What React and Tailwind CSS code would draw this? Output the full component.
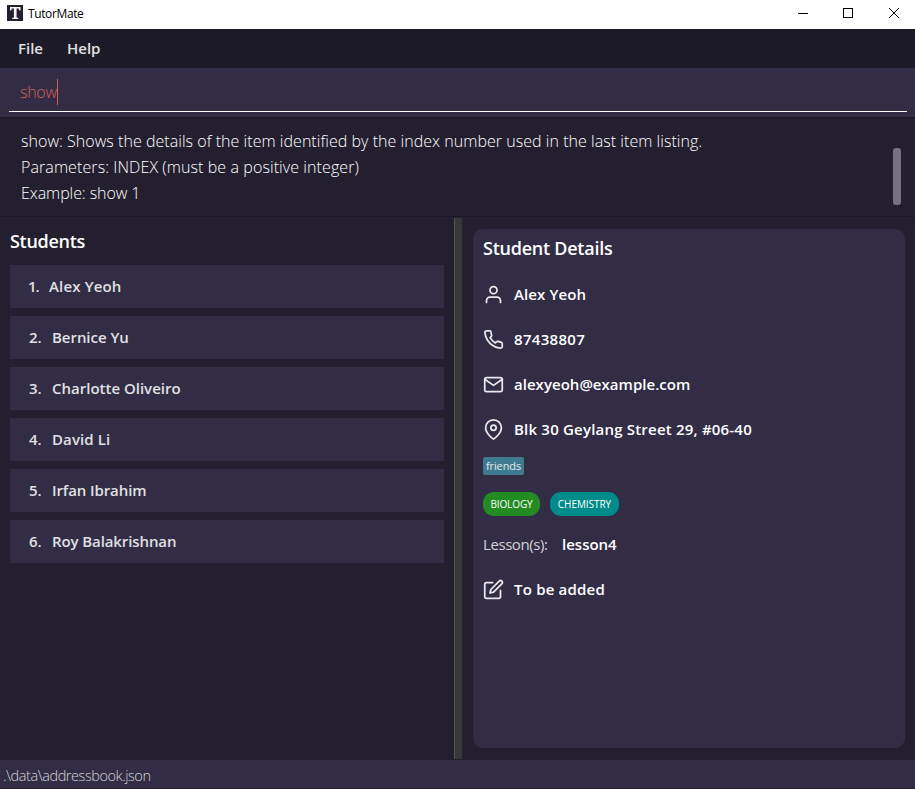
import React from "react";
import { FiUser, FiPhone, FiMail, FiMapPin, FiEdit } from "react-icons/fi";

const students = [
  { name: "Alex Yeoh", number: "-ml-px w-[11px] tracking-[-1px]", tracking: "tracking-[0.15px]" },
  { name: "Bernice Yu", number: "w-[13px]", tracking: "tracking-[-0.04px]" },
  { name: "Charlotte Oliveiro", number: "w-[13px]", tracking: "tracking-normal" },
  { name: "David Li", number: "w-[13px]", tracking: "tracking-[0.1px]" },
  { name: "Irfan Ibrahim", number: "w-[13px]", tracking: "tracking-[-0.1px]" },
  { name: "Roy Balakrishnan", number: "w-[13px]", tracking: "tracking-[-0.1px]" },
];

function TitleBar() {
  return (
    <header className="flex h-[29px] shrink-0 items-center bg-white pl-[7px] text-black">
      <span className="mb-[3px] flex h-4 w-4 items-center justify-center bg-[#241f2f]">
        <svg width="16" height="16" viewBox="0 0 16 16" fill="#f4f4ee">
          <path d="M3 2h10.5v3.5h-1.2L11.6 3.500H9.600V12.500L11.300 13v1H5.200v-1L6.900 12.500V3.500H4.900L4.200 5.500H3z" />
        </svg>
      </span>
      <span className="mb-px ml-[5px] text-[12px] leading-4 tracking-[-0.38px]">TutorMate</span>
      <svg className="mb-[3px] ml-auto mr-[15px]" width="102" height="12" viewBox="0 0 102 12" fill="none" stroke="#000">
        <path d="M0 6.500h10" />
        <rect x="45.500" y="1.500" width="9" height="9" />
        <path d="M91 1l10 10M101 1L91 11" />
      </svg>
    </header>
  );
}

function Detail({ icon: Icon, tracking = "tracking-normal", children }) {
  return (
    <div className="flex h-[45px] items-center">
      <Icon size={21} color="#e9e8ec" />
      <span className={`ml-[10px] text-[15px] font-semibold ${tracking}`}>{children}</span>
    </div>
  );
}

export default function App() {
  return (
    <div className="flex h-[789px] w-[915px] flex-col overflow-hidden bg-[#241f2f] font-['Open_Sans',sans-serif] text-white">
      <TitleBar />
      <nav className="flex h-[39px] shrink-0 items-center gap-6 bg-[#1c1a26] pl-[18px] text-[15px] font-semibold text-[#e0e0e3]">
        <span>File</span>
        <span>Help</span>
      </nav>
      <div className="h-[50px] shrink-0 border-b border-[#1c1a26] bg-[#322d45] pl-[9px] pr-2">
        <div className="flex h-11 items-center border-b border-white pl-[11px] pt-[5px] text-[16px] font-light text-[#d0614f]">
          <span className="tracking-[-0.3px]">show</span>
          <span className="h-[26px] w-px bg-[#d0614f]" />
        </div>
      </div>
      <div className="flex h-[99px] shrink-0 justify-between border-b border-[#1c1a26] pl-[21px] pr-[14px] pt-[10px]">
        <div className="whitespace-nowrap text-[16px] font-light leading-[26px]">
          <p className="tracking-[0.04px]">show: Shows the details of the item identified by the index number used in the last item listing.</p>
          <p className="tracking-[0.09px]">Parameters: INDEX (must be a positive integer)</p>
          <p className="tracking-[-0.07px]">Example: show 1</p>
        </div>
        <div className="mt-5 h-[57px] w-2 rounded-[3px] bg-[#757180]" />
      </div>
      <main className="flex min-h-0 flex-1 pb-px pt-px">
        <section className="w-[454px] pl-[10px] pr-[10px] pt-[11px]">
          <h2 className="h-9 text-[18px] font-semibold leading-6 tracking-[-0.3px]">Students</h2>
          <div className="flex flex-col gap-2">
            {students.map((student, index) => (
              <div key={student.name} className="flex h-[43px] items-center gap-[10px] bg-[#322d45] pl-[19px] text-[15px] font-semibold text-[#e0e0e3]">
                <span className={student.number}>{index + 1}.</span>
                <span className={student.tracking}>{student.name}</span>
              </div>
            ))}
          </div>
        </section>
        <div className="w-2 border-l border-[#555555] bg-[#383838]" />
        <section className="mb-[11px] ml-[11px] mr-[10px] mt-[11px] flex-1 rounded-[10px] bg-[#322d45] pl-[10px] pt-[7px]">
          <h2 className="h-9 text-[18px] font-semibold leading-6 tracking-[-0.25px]">Student Details</h2>
          <Detail icon={FiUser} tracking="tracking-[0.12px]">Alex Yeoh</Detail>
          <Detail icon={FiPhone} tracking="tracking-[0.3px]">87438807</Detail>
          <Detail icon={FiMail} tracking="tracking-[0.03px]">alexyeoh@example.com</Detail>
          <Detail icon={FiMapPin} tracking="tracking-[0.2px]">Blk 30 Geylang Street 29, #06-40</Detail>
          <div className="mt-[5px] flex">
            <span className="flex h-[18px] w-[41px] items-center justify-center rounded-[2px] bg-[#3e7b91] text-[11px] tracking-[-0.1px] text-[#e4e9ec]">friends</span>
          </div>
          <div className="mt-[17px] flex gap-[10px] text-[10px]">
            <span className="flex h-6 w-[57px] items-center justify-center rounded-[11px] bg-[#228b22] tracking-[-0.1px]">BIOLOGY</span>
            <span className="flex h-6 w-[69px] items-center justify-center rounded-[11px] bg-[#008b8b] tracking-[-0.05px]">CHEMISTRY</span>
          </div>
          <div className="mt-[6px] flex h-[45px] items-center text-[15px]">
            <span className="w-[79px] tracking-[-0.42px] text-[#d3d2d8]">Lesson(s):</span>
            <span className="font-semibold">lesson4</span>
          </div>
          <Detail icon={FiEdit} tracking="tracking-[0.2px]">To be added</Detail>
        </section>
      </main>
      <footer className="flex h-[29px] shrink-0 items-center border-b border-[#241f2f] bg-[#322d45] pl-[3px] pt-[3px] text-[14.500px] font-light tracking-[-0.43px] text-[#d3d2d8]">
        .\data\addressbook.json
      </footer>
    </div>
  );
}
